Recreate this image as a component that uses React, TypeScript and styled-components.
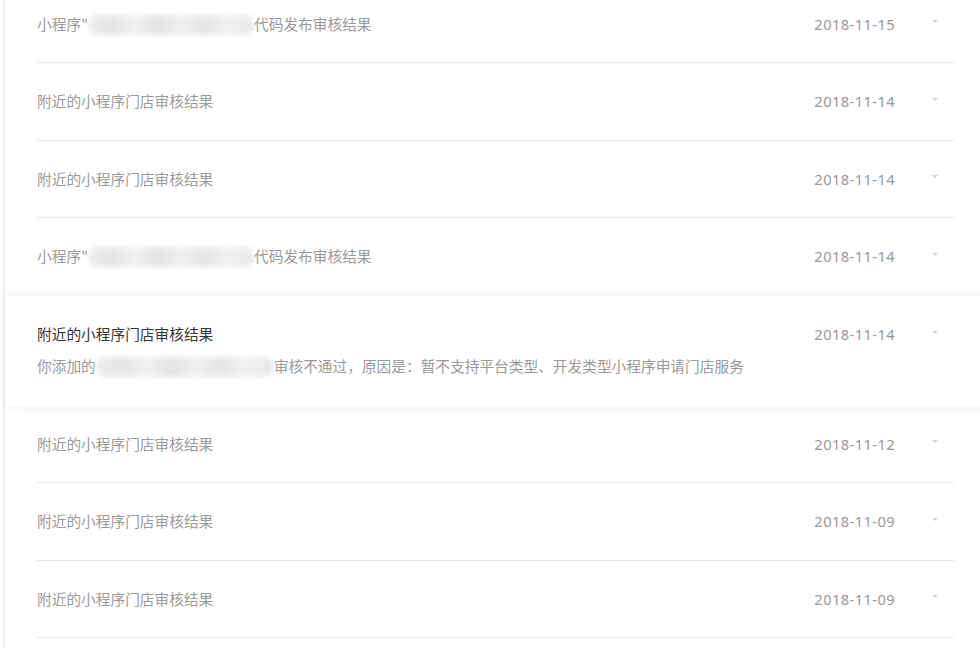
import React from "react";
import styled, { createGlobalStyle } from "styled-components";

const GlobalStyle = createGlobalStyle`
  html, body {
    margin: 0;
    padding: 0;
    background: #fff;
    height: 648px;
    overflow: hidden;
  }
  body {
    font-family: "Noto Sans CJK SC", "Noto Sans", sans-serif;
  }
`;

const Page = styled.div`
  padding-left: 3px;
  height: 648px;
  overflow: hidden;
`;

const Panel = styled.div`
  border-left: 2px solid #efefef;
  min-height: 700px;
  margin-top: -14.5px;
`;

const Item = styled.div<{ $open?: boolean }>`
  position: relative;
  padding: 0 26px 0 32px;
  background: #fff;
  ${p =>
    p.$open &&
    `
    z-index: 1;
    margin-right: -30px;
    padding-right: 56px;
    box-shadow: 0 0 14px rgba(0, 0, 0, 0.07);
  `}
`;

const Row = styled.div<{ $last?: boolean }>`
  box-sizing: border-box;
  height: 77.5px;
  display: flex;
  align-items: center;
  border-bottom: 1px solid ${p => (p.$last ? "transparent" : "#e8e8e8")};
`;

const OpenBody = styled.div`
  box-sizing: border-box;
  height: 110px;
  padding-top: 27px;
  display: flex;
  flex-direction: column;
`;

const Head = styled.div`
  display: flex;
  align-items: center;
  height: 22px;
`;

const Title = styled.div<{ $dark?: boolean }>`
  flex: 1;
  font-size: 14.7px;
  line-height: 22px;
  color: ${p => (p.$dark ? "#353535" : "#9b9b9b")};
  white-space: nowrap;
`;

const Desc = styled.div`
  margin-top: 10px;
  font-size: 14.7px;
  line-height: 22px;
  color: #9a9a9a;
  white-space: nowrap;
`;

const Blur = styled.span<{ $w: number }>`
  display: inline-block;
  width: ${p => p.$w}px;
  height: 20px;
  vertical-align: -5px;
  border-radius: 9px;
  background: linear-gradient(
    90deg,
    #eeeeee 0%,
    #e5e5e5 15%,
    #f2f2f2 28%,
    #e4e4e4 42%,
    #f0f0f0 56%,
    #e6e6e6 70%,
    #f1f1f1 84%,
    #e8e8e8 100%
  );
  filter: blur(2.5px);
`;

const DateText = styled.div`
  font-family: "Noto Sans", sans-serif;
  font-size: 14.7px;
  letter-spacing: 0.4px;
  color: #999;
  margin-right: 37px;
`;

const Caret = styled.span<{ $up?: boolean }>`
  width: 0;
  height: 0;
  margin-right: 16px;
  margin-top: -4px;
  border-left: 3.5px solid transparent;
  border-right: 3.5px solid transparent;
  ${p =>
    p.$up
      ? "border-bottom: 3px solid #d6d6d6;"
      : "border-top: 3px solid #d6d6d6;"}
`;

interface Notice {
  id: number;
  kind: "store" | "code";
  date: string;
  open?: boolean;
}

const notices: Notice[] = [
  { id: 1, kind: "code", date: "2018-11-15" },
  { id: 2, kind: "store", date: "2018-11-14" },
  { id: 3, kind: "store", date: "2018-11-14" },
  { id: 4, kind: "code", date: "2018-11-14" },
  { id: 5, kind: "store", date: "2018-11-14", open: true },
  { id: 6, kind: "store", date: "2018-11-12" },
  { id: 7, kind: "store", date: "2018-11-09" },
  { id: 8, kind: "store", date: "2018-11-09" },
];

const NoticeTitle = ({ kind, dark }: { kind: Notice["kind"]; dark?: boolean }) =>
  kind === "store" ? (
    <Title $dark={dark}>附近的小程序门店审核结果</Title>
  ) : (
    <Title $dark={dark}>
      小程序"<Blur $w={166} />代码发布审核结果
    </Title>
  );

export default function App() {
  return (
    <>
      <GlobalStyle />
      <Page>
        <Panel>
          {notices.map((n, i) => {
            if (n.open) {
              return (
                <Item key={n.id} $open>
                  <OpenBody>
                    <Head>
                      <NoticeTitle kind={n.kind} dark />
                      <DateText>{n.date}</DateText>
                      <Caret $up />
                    </Head>
                    <Desc>
                      你添加的<Blur $w={178} />审核不通过，原因是：暂不支持平台类型、开发类型小程序申请门店服务
                    </Desc>
                  </OpenBody>
                </Item>
              );
            }
            const nextOpen = notices[i + 1]?.open;
            return (
              <Item key={n.id}>
                <Row $last={nextOpen}>
                  <NoticeTitle kind={n.kind} />
                  <DateText>{n.date}</DateText>
                  <Caret />
                </Row>
              </Item>
            );
          })}
        </Panel>
      </Page>
    </>
  );
}
